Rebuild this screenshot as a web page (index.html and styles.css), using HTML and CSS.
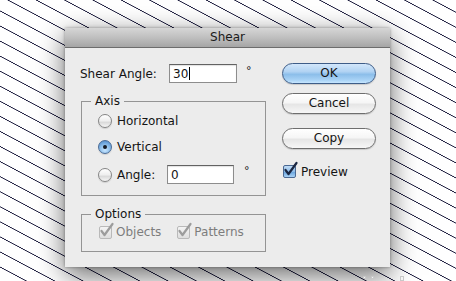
FILE: index.html
```html
<!DOCTYPE html>
<html>
<head>
<meta charset="utf-8">
<link rel="stylesheet" href="styles.css">
</head>
<body>
<div class="dialog">
  <div class="titlebar">Shear</div>
  <div class="content">
    <div class="left">
      <div class="row-angle">
        <span class="label">Shear Angle:</span>
        <span class="field">30<span class="caret"></span></span>
        <span class="deg">°</span>
      </div>
      <fieldset class="group axis">
        <legend>Axis</legend>
        <div class="opt first"><span class="radio"></span>Horizontal</div>
        <div class="opt second"><span class="radio on"></span>Vertical</div>
        <div class="opt third"><span class="radio"></span><span class="lbl">Angle:</span><span class="field small">0</span><span class="deg">°</span></div>
      </fieldset>
      <fieldset class="group options">
        <legend>Options</legend>
        <div class="checks">
          <span class="check disabled"><svg viewBox="0 0 16 16"><path d="M2.5 8 L5.5 12 L13.5 1"/></svg></span><span>Objects</span>
          <span class="check disabled second-check"><svg viewBox="0 0 16 16"><path d="M2.5 8 L5.5 12 L13.5 1"/></svg></span><span>Patterns</span>
        </div>
      </fieldset>
    </div>
    <div class="right">
      <div class="btn ok">OK</div>
      <div class="btn cancel">Cancel</div>
      <div class="btn copy">Copy</div>
      <div class="preview"><span class="check on"><svg viewBox="0 0 16 16"><path d="M2.5 8 L5.5 12 L13.5 1"/></svg></span><span>Preview</span></div>
    </div>
  </div>
</div>
<span class="handle h1"></span><span class="handle h2"></span><span class="handle h3"></span>
</body>
</html>
```
FILE: styles.css
```css
html, body { margin: 0; }
body {
  width: 456px;
  height: 281px;
  overflow: hidden;
  box-sizing: border-box;
  padding: 28px 0 0 65px;
  background: repeating-linear-gradient(28deg, #ffffff 0px, #ffffff 11.7px, #1f1f40 12.2px, #1f1f40 12.6px, #ffffff 13.1px, #ffffff 13.3px);
  font-family: "DejaVu Sans", "Liberation Sans", sans-serif;
  font-size: 12px;
  color: #141414;
}
.dialog {
  width: 325px;
  height: 239px;
  background: #ececec;
  box-shadow: 0 8px 26px rgba(0,0,0,0.6), 0 0 3px rgba(0,0,0,0.35);
  display: flex;
  flex-direction: column;
}
.titlebar {
  height: 19px;
  line-height: 19px;
  text-align: center;
  border-bottom: 1px solid #6c6c6c;
  background: linear-gradient(#d6d6d6, #bfbfbf 50%, #a5a5a5);
  color: #1a1a1a;
}
.content {
  display: flex;
  gap: 16px;
  padding: 15px 14px 0 15px;
}
.left { width: 186px; padding-top: 1px; }
.row-angle { display: flex; align-items: center; height: 19px; }
.label { width: 89px; }
.field {
  box-sizing: border-box;
  width: 68px;
  height: 19px;
  background: #fff;
  border: 1px solid #8d8d8d;
  border-top-color: #626262;
  box-shadow: inset 0 1px 1px rgba(0,0,0,0.12);
  padding-left: 3px;
  display: flex;
  align-items: center;
}
.field.small { width: 67px; }
.caret { width: 1px; height: 13px; background: #000; margin-left: 1px; }
.deg { margin-left: 9px; font-size: 11px; align-self: flex-start; margin-top: 0; }
.third .deg { margin-left: 10px; }

.group {
  box-sizing: border-box;
  width: 185px;
  min-width: 0;
  margin: 11px 0 0 1px;
  padding: 3px 0 10px 13px;
  border: 1px solid #949494;
}
.group legend {
  font-size: 12px;
  line-height: 14px;
  padding: 0 4px;
  margin-left: -4px;
  color: #141414;
}
.opt { display: flex; align-items: center; margin-left: 3px; }
.opt.first { height: 20px; }
.opt.second { height: 21px; margin-top: 5px; }
.opt.third { height: 21px; margin-top: 7px; }
.lbl { width: 50px; }
.radio {
  box-sizing: border-box;
  width: 14px;
  height: 14px;
  border-radius: 50%;
  margin-right: 5px;
  border: 1px solid #858585;
  background: linear-gradient(#ffffff, #eeeeee 50%, #d9d9d9 60%, #f6f6f6);
  box-shadow: 0 1px 1px rgba(0,0,0,0.12);
  display: flex;
  align-items: center;
  justify-content: center;
}
.radio.on {
  border-color: #4a6b95;
  background: radial-gradient(circle at 50% 75%, #c9e6ff 0, #8fc0ec 45%, #5d97d3 80%);
}
.radio.on::after {
  content: "";
  width: 4px;
  height: 4px;
  border-radius: 50%;
  background: #161c26;
}

.group.options { padding-bottom: 11px; }
.checks { display: flex; align-items: center; height: 16px; margin-left: 4px; color: #7d7d7d; }
.check {
  position: relative;
  box-sizing: border-box;
  width: 13px;
  height: 13px;
  border-radius: 2px;
  margin-right: 4px;
  flex: none;
}
.check svg {
  position: absolute;
  left: -1px;
  top: -4px;
  width: 16px;
  height: 16px;
  overflow: visible;
}
.check svg path { fill: none; stroke-width: 2.2; stroke-linejoin: round; stroke-linecap: round; }
.check.disabled { border: 1px solid #b9b9b9; background: linear-gradient(#f4f4f4, #dedede); }
.check.disabled svg path { stroke: #9c9c9c; }
.second-check { margin-left: 16px; }
.check.on { border: 1px solid #4a6892; background: linear-gradient(#c0dbf5, #8fbde9 50%, #6aa5de 55%, #a9d2f6); }
.check.on svg path { stroke: #1a2642; }

.right { width: 94px; display: flex; flex-direction: column; }
.btn {
  box-sizing: border-box;
  height: 21px;
  line-height: 19px;
  text-align: center;
  border-radius: 11px;
  border: 1px solid #6e6e6e;
  background: linear-gradient(#ffffff, #f6f6f6 45%, #e6e6e6 55%, #f7f7f7);
  box-shadow: 0 1px 1px rgba(0,0,0,0.15);
  color: #141414;
}
.btn.ok {
  border-color: #3e5d88;
  background: linear-gradient(#d3e7fb, #b1d3f3 40%, #8cbeea 55%, #a9d3f6 85%, #c6e6ff);
}
.btn.cancel { margin-top: 9px; }
.btn.copy { margin-top: 14px; }
.preview { display: flex; align-items: center; height: 13px; margin-top: 16px; margin-left: 1px; }
.preview .check { margin-right: 5px; }

.handle { position: absolute; width: 3px; height: 3px; background: #f4f4f4; border: 1px solid #c8c8c8; box-sizing: border-box; }
.h1 { left: 363px; top: 276px; }
.h2 { left: 371px; top: 276px; }
.h3 { left: 400px; top: 276px; width: 4px; height: 5px; }
```
